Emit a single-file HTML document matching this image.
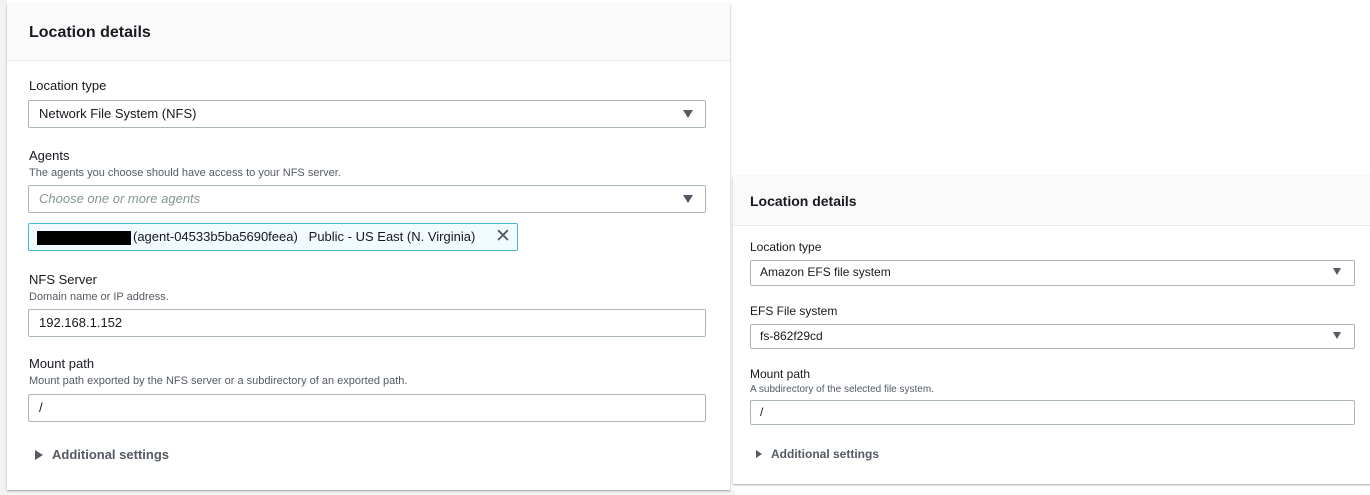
<!DOCTYPE html>
<html><head><meta charset="utf-8"><style>
*{margin:0;padding:0;box-sizing:border-box}
body{width:1370px;height:495px;background:#fff;position:relative;overflow:hidden;font-family:"Liberation Sans",Arial,sans-serif;color:#16191f}
.a{position:absolute;white-space:nowrap}
.panel{position:absolute;background:#fff;box-shadow:0 1px 2px rgba(0,0,0,.35)}
.hd{position:absolute;left:0;right:0;top:0;background:#fafafa;border-bottom:1px solid #eaeded}
.box{position:absolute;border:1px solid #aab7b8;border-radius:2px;background:#fff}
.tri{position:absolute;width:0;height:0;border-left:5px solid transparent;border-right:5px solid transparent;border-top:8px solid #545b64}
.rt{position:absolute;width:0;height:0;border-top:5px solid transparent;border-bottom:5px solid transparent;border-left:8px solid #545b64}
</style></head><body>
<div style="position:absolute;left:0;top:0;width:7px;height:495px;background:#f2f3f3"></div>
<div style="position:absolute;left:0;top:490px;width:735px;height:5px;background:#f2f3f3"></div>
<div class="panel" style="left:7px;top:4px;width:723px;height:486px">
 <div class="hd" style="height:57px"></div>
</div>
<div class="a" style="left:29px;top:24px;font-size:16px;font-weight:bold">Location details</div>
<div class="a" style="left:29px;top:78px;font-size:13px">Location type</div>
<div class="box" style="left:28px;top:100px;width:678px;height:28px"></div>
<div class="a" style="left:39px;top:106px;font-size:13px">Network File System (NFS)</div>
<div class="tri" style="left:683px;top:110px"></div>
<div class="a" style="left:29px;top:148px;font-size:13px">Agents</div>
<div class="a" style="left:29px;top:167px;font-size:11px;color:#545b64">The agents you choose should have access to your NFS server.</div>
<div class="box" style="left:28px;top:185px;width:678px;height:28px"></div>
<div class="a" style="left:39px;top:191px;font-size:13px;font-style:italic;color:#879596">Choose one or more agents</div>
<div class="tri" style="left:683px;top:195px"></div>
<div class="box" style="left:28px;top:223px;width:490px;height:28px;border-color:#44b9d6;background:#f1faff"></div>
<div style="position:absolute;left:37px;top:231px;width:94px;height:14px;background:#000"></div>
<div class="a" style="left:133px;top:229px;font-size:13px">(agent-04533b5ba5690feea)&nbsp;&nbsp; Public - US East (N. Virginia)</div>
<div class="a" style="left:495px;top:225px;font-size:19px;color:#545b64">✕</div>
<div class="a" style="left:29px;top:272px;font-size:13px">NFS Server</div>
<div class="a" style="left:29px;top:291px;font-size:11px;color:#545b64">Domain name or IP address.</div>
<div class="box" style="left:28px;top:309px;width:678px;height:28px"></div>
<div class="a" style="left:39px;top:315px;font-size:13px">192.168.1.152</div>
<div class="a" style="left:29px;top:356px;font-size:13px">Mount path</div>
<div class="a" style="left:29px;top:375px;font-size:11px;color:#545b64">Mount path exported by the NFS server or a subdirectory of an exported path.</div>
<div class="box" style="left:28px;top:394px;width:678px;height:28px"></div>
<div class="a" style="left:39px;top:400px;font-size:13px">/</div>
<div class="rt" style="left:35px;top:450px"></div>
<div class="a" style="left:52px;top:447px;font-size:13px;font-weight:bold;color:#545b64">Additional settings</div>

<div class="panel" style="left:733px;top:176px;width:640px;height:308px">
 <div class="hd" style="height:50px"></div>
</div>
<div class="a" style="left:750px;top:193px;font-size:14px;font-weight:bold">Location details</div>
<div class="a" style="left:750px;top:240px;font-size:12px">Location type</div>
<div class="box" style="left:750px;top:260px;width:605px;height:26px"></div>
<div class="a" style="left:760px;top:265px;font-size:12px">Amazon EFS file system</div>
<div class="tri" style="left:1333px;top:268px;border-top-width:7px;border-left-width:4px;border-right-width:4px"></div>
<div class="a" style="left:750px;top:304px;font-size:12px">EFS File system</div>
<div class="box" style="left:750px;top:324px;width:605px;height:25px"></div>
<div class="a" style="left:760px;top:329px;font-size:12px">fs-862f29cd</div>
<div class="tri" style="left:1333px;top:332px;border-top-width:7px;border-left-width:4px;border-right-width:4px"></div>
<div class="a" style="left:750px;top:367px;font-size:12px">Mount path</div>
<div class="a" style="left:750px;top:384px;font-size:10px;color:#545b64">A subdirectory of the selected file system.</div>
<div class="box" style="left:750px;top:400px;width:605px;height:25px"></div>
<div class="a" style="left:760px;top:405px;font-size:12px">/</div>
<div class="rt" style="left:756px;top:450px;border-top-width:4px;border-bottom-width:4px;border-left-width:6px"></div>
<div class="a" style="left:771px;top:447px;font-size:12px;font-weight:bold;color:#545b64">Additional settings</div>
</body></html>
